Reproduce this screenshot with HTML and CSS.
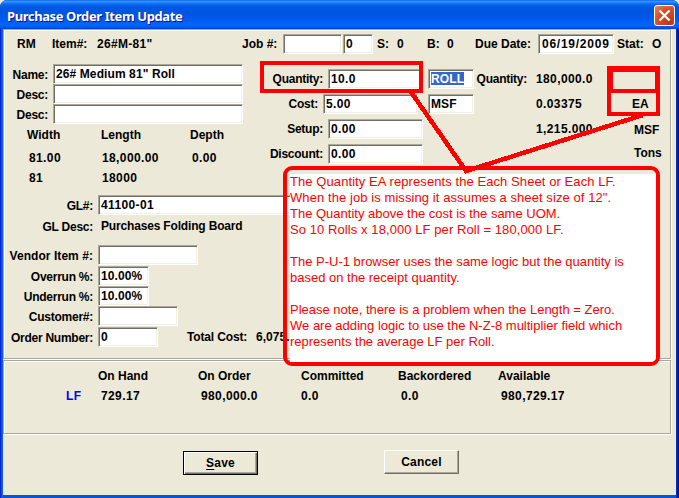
FILE: index.html
```html
<!DOCTYPE html>
<html lang="en">
<head>
<meta charset="utf-8">
<title>Purchase Order Item Update</title>
<link rel="stylesheet" href="styles.css">
</head>
<body>
<div class="window">
  <header class="titlebar">
    <h1>Purchase Order Item Update</h1>
    <button class="close" aria-label="Close"><svg width="13" height="13" viewBox="0 0 13 13"><path d="M1.5 1.5L11.5 11.5M11.5 1.5L1.5 11.5" stroke="#fff" stroke-width="2.2"/></svg></button>
  </header>
  <main class="client">
    <section class="panel item">
      <div class="head">
        <span>RM</span><span>Item#:</span><span class="code">26#M-81"</span><span>Job #:</span>
        <div class="field job"></div><div class="field jobno num">0</div>
        <span>S:</span><span>0</span><span>B:</span><span>0</span>
        <span>Due Date:</span><div class="field date num">06/19/2009</div><span>Stat:</span><span>O</span>
      </div>
      <div class="columns">
        <div class="left">
          <div class="row name"><label>Name:</label><div class="field">26# Medium 81" Roll</div></div>
          <div class="row name"><label>Desc:</label><div class="field"></div></div>
          <div class="row name"><label>Desc:</label><div class="field"></div></div>
          <div class="sizes heads"><span>Width</span><span>Length</span><span>Depth</span></div>
          <div class="sizes values num"><span>81.00</span><span>18,000.00</span><span>0.00</span></div>
          <div class="sizes values num whole"><span>81</span><span>18000</span></div>
          <div class="row gl"><label>GL#:</label><div class="field wide num">41100-01</div></div>
          <div class="row desc"><label>GL Desc:</label><span class="plain">Purchases Folding Board</span></div>
          <div class="row"><label class="loose">Vendor Item #:</label><div class="field vendor"></div></div>
          <div class="row over"><label>Overrun %:</label><div class="field percent">10.00%</div></div>
          <div class="row"><label>Underrun %:</label><div class="field percent">10.00%</div></div>
          <div class="row"><label>Customer#:</label><div class="field customer"></div></div>
          <div class="row over"><label>Order Number:</label><div class="field order num">0</div><span class="total">Total Cost:</span><span class="sum">6,075.</span></div>
        </div>
        <div class="right">
          <div class="line"><label>Quantity:</label><div class="field amount num">10.0</div><div class="field unit"><mark>ROLL</mark></div><label>Quantity:</label><span class="num">180,000.0</span></div>
          <div class="line cost"><label>Cost:</label><div class="field amount num">5.00</div><div class="field unit">MSF</div><span></span><span class="num">0.03375</span><span>EA</span></div>
          <div class="line"><label>Setup:</label><div class="field amount num">0.00</div><span></span><span></span><span class="num">1,215.000</span><span class="msf">MSF</span></div>
          <div class="line"><label>Discount:</label><div class="field amount num">0.00</div><span></span><span></span><span></span><span class="tons">Tons</span></div>
        </div>
      </div>
    </section>
    <section class="panel stock">
      <div class="stockrow"><span></span><span>On Hand</span><span>On Order</span><span>Committed</span><span>Backordered</span><span>Available</span></div>
      <div class="stockrow amounts num"><span class="lf">LF</span><span>729.17</span><span>980,000.0</span><span>0.0</span><span>0.0</span><span>980,729.17</span></div>
    </section>
    <footer class="actions"><button class="save"><i><u>S</u>ave</i></button><button class="cancel">Cancel</button></footer>
  </main>
  <aside class="note">
    <div class="paper">
      <p><span class="airy">The Quantity EA represents the Each Sheet or Each LF.<br>When the job is missing it assumes a sheet size of 12".</span><br>The Quantity above the cost is the same UOM.<br><span class="airy">So 10 Rolls x 18,000 LF per Roll = 180,000 LF.</span></p>
      <p>The P-U-1 browser uses the same logic but the quantity is<br>based on the receipt quantity.</p>
      <p>Please note, there is a problem when the Length = Zero.<br>We are adding logic to use the N-Z-8 multiplier field which<br>represents the average LF per Roll.</p>
    </div>
  </aside>
  <svg class="marks" width="679" height="498" viewBox="0 0 679 498" fill="none" stroke="#f00" stroke-width="4" shape-rendering="crispEdges">
    <rect x="262" y="63" width="159" height="28"/>
    <path d="M607 66H660V116H607ZM613 72V89H655V72ZM611 93V112H656V93Z" fill="#f00" fill-rule="evenodd" stroke="none"/>
    <path d="M411 92L466 171L643 115" stroke-width="4.5"/>
  </svg>
</div>
</body>
</html>
```
FILE: styles.css
```css
* { box-sizing: border-box; }
body { margin: 0; background: #ece9d8; font: bold 12px/20px "Liberation Sans", Arial, sans-serif; color: #000; }
.window { position: relative; width: 679px; height: 498px; overflow: hidden; display: flex; flex-direction: column; background: linear-gradient(90deg, #0019cf 0, #0831d9 1px, #166aee 2px, #0855dd 3px, #0855dd 676px, #0441d8 676px, #001ea0 677px, #00138c 679px); border-radius: 7px 7px 0 0; white-space: nowrap; }
.titlebar { flex: none; height: 29px; padding: 2px 4px 0 7px; display: flex; align-items: center; justify-content: space-between; background: linear-gradient(#0058ee 0, #3a93ff 1px, #288eff 2px, #0a6bf0 4px, #0058e2 7px, #0054e0 14px, #005bf0 20px, #0066ff 25px, #005bf0 27px, #003dd0 29px); }
h1 { margin: 1px 0 0; font: bold 13px/20px "Noto Sans", "Open Sans", sans-serif; letter-spacing: -.4px; color: #fff; text-shadow: 1px 1px #0f1089; }
.close { width: 21px; height: 21px; padding: 0; display: grid; place-items: center; border: 1px solid #fff; border-radius: 3px; background: radial-gradient(circle at 80% 85%, #c13516, #da4f29 60%, #e8876b); }
.client { flex: none; height: 466px; margin: 0 3px; background: #ece9d8; }
.panel { width: 668px; border: 1px solid #aca899; box-shadow: 1px 1px #fff, inset 1px 1px #fff; }
.item { height: 330px; padding-top: 4px; overflow: hidden; }
.field { height: 20px; padding: 0 0 0 2px; line-height: 18px; background: #fff; border: 1px solid; border-color: #aca899 #fff #fff #aca899; box-shadow: inset 1px 1px #716f64, inset -1px -1px #f1efe2; letter-spacing: .1px; }
.num { letter-spacing: .38px; }
.head { display: grid; grid-template-columns: 35px 45px 145px 41px 60px 34px 20px 30px 20px 28px 63px 79px 35px auto; height: 20px; padding-left: 13px; }
.code { letter-spacing: .3px; }
.job { width: 59px; }
.jobno { width: 30px; }
.date { width: 76px; padding-left: 3px; letter-spacing: .75px; }
.columns { display: flex; padding-top: 10px; }
.left { flex: none; width: 241px; }
.row { display: flex; height: 20px; gap: 5px; }
.row > * { flex: none; }
.row label { width: 89px; text-align: right; padding-top: 1px; letter-spacing: -.25px; }
.row label.loose { letter-spacing: .05px; }
.row.name label { width: 44px; }
.row.name .field { width: 190px; }
.sizes { display: grid; grid-template-columns: 74px 89px auto; height: 20px; padding-left: 23px; }
.heads { margin-top: 1px; }
.values { grid-template-columns: 73px 90px auto; padding-left: 25px; margin-top: 3px; }
.whole { margin-top: 0; }
.gl { margin-top: 7px; }
.desc { margin: 1px 0 9px; }
.over { margin-top: 1px; }
.plain { padding-left: 3px; letter-spacing: -.17px; }
.wide { width: 260px; }
.vendor { width: 100px; }
.percent { width: 51px; }
.customer { width: 80px; }
.order { width: 60px; }
.total { margin-left: 24px; width: 64px; letter-spacing: -.15px; }
.sum { letter-spacing: .05px; }
.right { padding-top: 5px; }
.line { display: grid; grid-template-columns: 78px 5px 100px 45px 54px 9px 98px auto; height: 20px; margin-bottom: 5px; }
.line label { text-align: right; letter-spacing: -.25px; }
.line > :nth-child(2) { grid-column: 3; }
.line > :nth-child(3) { grid-column: 4; }
.line > :nth-child(4) { grid-column: 5; }
.line > :nth-child(5) { grid-column: 7; }
.line > :nth-child(6) { grid-column: 8; }
.cost { grid-template-columns: 73px 5px 105px 45px 54px 9px 96px auto; }
.amount { width: 95px; }
.unit { width: 46px; }
mark { display: inline-block; height: 13px; margin-top: 2px; line-height: 14px; background: #316ac5; color: #fff; vertical-align: top; }
.msf { padding-top: 1px; }
.tons { margin-top: -1px; }
.stock { height: 74px; margin-top: 1px; padding-top: 5px; }
.stockrow { display: grid; grid-template-columns: 32px 100px 103px 97px 100px auto; padding-left: 62px; height: 20px; }
.amounts { grid-template-columns: 35px 100px 100px 100px 100px auto; }
.lf { color: #00f; }
.actions { display: flex; gap: 126px; padding: 16px 0 0 180px; }
.actions button { width: 75px; height: 24px; padding: 0; font: inherit; color: #000; background: #ece9d8; border: 1px solid; border-color: #fff #716f64 #716f64 #fff; box-shadow: inset -1px -1px #aca899; letter-spacing: .2px; }
.actions .save { margin-top: 1px; border-color: #000; box-shadow: inset 1px 1px #fff, inset -1px -1px #716f64, inset -2px -2px #aca899; }
.save i { font-style: normal; }
.save u { text-underline-offset: 2px; }
.note { position: absolute; left: 283px; top: 166px; width: 377px; height: 200px; border: 4px solid #f00; border-radius: 9px; padding: 4px 0 0 3px; }
.paper { height: 188px; background: #ffffff; color: #f00; font: 13px/16px "Liberation Sans", Arial, sans-serif; border-radius: 0 0 5px 0; }
.paper p { margin: 0 0 16px; }
.airy { letter-spacing: .08px; }
.marks { position: absolute; left: 0; top: 0; pointer-events: none; }
```
